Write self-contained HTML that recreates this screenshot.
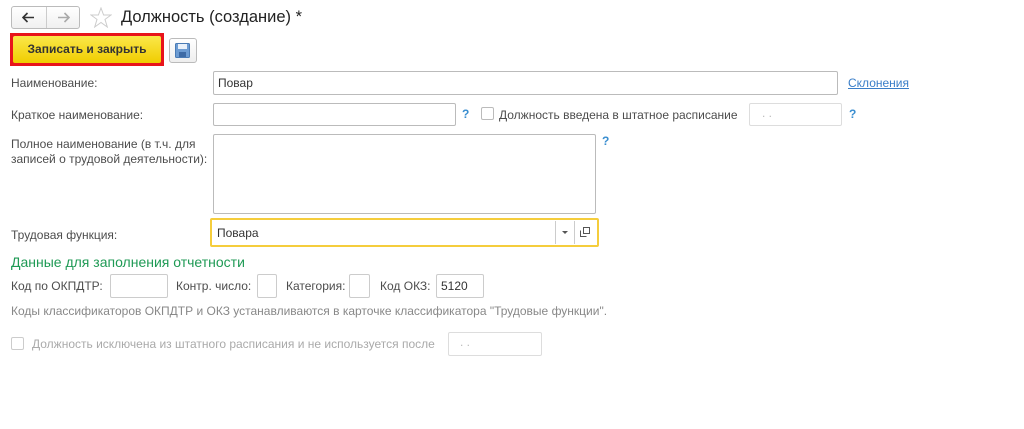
<!DOCTYPE html>
<html><head><meta charset="utf-8"><style>
body{margin:0;width:1024px;height:429px;background:#fff;font-family:"Liberation Sans",Arial,sans-serif;font-size:12px;color:#444;position:relative;overflow:hidden}
.a{position:absolute;white-space:nowrap}
.in{position:absolute;border:1px solid #bbb;border-radius:2px;background:#fff;box-sizing:border-box}
.lbl{position:absolute;color:#4d4d4d;font-size:12px;line-height:14px;white-space:nowrap}
.q{position:absolute;color:#3a8ed0;font-weight:bold;font-size:12px}
.cb{position:absolute;width:13px;height:13px;border:1px solid #bbb;border-radius:2px;box-sizing:border-box;background:#fff}
</style></head><body>
<div class="in" style="left:11px;top:6px;width:69px;height:23px;border-radius:3px;background:linear-gradient(#fff,#f0f0f0)"></div>
<div class="a" style="left:46px;top:7px;width:1px;height:21px;background:#ccc"></div>
<svg class="a" style="left:22px;top:12px" width="13" height="11"><path d="M1 5.5H12M5.5 1L1 5.5L5.5 10" stroke="#333" stroke-width="1.6" fill="none"/></svg>
<svg class="a" style="left:57px;top:12px" width="13" height="11"><path d="M1 5.5H12M7.5 1L12 5.5L7.5 10" stroke="#aaa" stroke-width="1.6" fill="none"/></svg>
<svg class="a" style="left:90px;top:7px" width="22" height="21"><path d="M11 1L13.6 8H21L15 12.4L17.3 20L11 15.5L4.7 20L7 12.4L1 8H8.4Z" fill="none" stroke="#ccc" stroke-width="1"/></svg>
<div class="a" style="left:121px;top:8px;font-size:16.5px;color:#222">Должность (создание) *</div>
<div class="a" style="left:10px;top:33px;width:154px;height:33px;background:#e8141b"></div>
<div class="a" style="left:13px;top:36px;width:148px;height:27px;background:linear-gradient(#fbe84a,#f0cd00);border-radius:2px;text-align:center;line-height:27px;font-weight:bold;color:#333;font-size:12px">Записать и закрыть</div>
<div class="in" style="left:169px;top:38px;width:28px;height:25px;border-radius:3px;background:linear-gradient(#fff,#eee)"></div>
<svg class="a" style="left:175px;top:43px" width="15" height="15"><rect x="0.5" y="0.5" width="14" height="14" rx="1" fill="#6c9bd2" stroke="#4a7bb5"/><rect x="3" y="1" width="9" height="5" fill="#e8f0fa"/><rect x="4" y="9" width="7" height="5" fill="#3d6aa5"/></svg>

<div class="lbl" style="left:11px;top:76px">Наименование:</div>
<div class="in" style="left:213px;top:71px;width:625px;height:24px"></div>
<div class="a" style="left:218px;top:76px;color:#333">Повар</div>
<div class="a" style="left:848px;top:76px;color:#3a7ec8;text-decoration:underline">Склонения</div>

<div class="lbl" style="left:11px;top:108px">Краткое наименование:</div>
<div class="in" style="left:213px;top:103px;width:243px;height:23px"></div>
<div class="q" style="left:462px;top:107px">?</div>
<div class="cb" style="left:481px;top:107px"></div>
<div class="lbl" style="left:499px;top:108px">Должность введена в штатное расписание</div>
<div class="in" style="left:749px;top:103px;width:93px;height:23px;border-color:#ddd"></div>
<div class="a" style="left:762px;top:106px;color:#bbb">. .</div>
<div class="q" style="left:849px;top:107px">?</div>

<div class="lbl" style="left:11px;top:137px;line-height:15px">Полное наименование (в т.ч. для<br>записей о трудовой деятельности):</div>
<div class="in" style="left:213px;top:134px;width:383px;height:80px"></div>
<div class="q" style="left:602px;top:134px">?</div>

<div class="lbl" style="left:11px;top:228px">Трудовая функция:</div>
<div class="a" style="left:210px;top:218px;width:389px;height:29px;border:2px solid #f5cd3c;box-sizing:border-box;border-radius:2px;background:#fff"></div>
<div class="a" style="left:217px;top:226px;color:#333">Повара</div>
<div class="a" style="left:555px;top:221px;width:1px;height:23px;background:#ccc"></div>
<div class="a" style="left:574px;top:221px;width:1px;height:23px;background:#ccc"></div>
<svg class="a" style="left:562px;top:231px" width="6" height="4"><path d="M0 0H6L3 3Z" fill="#555"/></svg>
<svg class="a" style="left:580px;top:227px" width="10" height="10"><rect x="3.5" y="0.5" width="6" height="6" fill="none" stroke="#555"/><path d="M0.5 3.5V9.5H6.5" fill="none" stroke="#555"/></svg>

<div class="a" style="left:11px;top:254px;font-size:14px;color:#1f9a55">Данные для заполнения отчетности</div>
<div class="lbl" style="left:11px;top:279px">Код по ОКПДТР:</div>
<div class="in" style="left:110px;top:274px;width:58px;height:24px;border-color:#ccc"></div>
<div class="lbl" style="left:176px;top:279px">Контр. число:</div>
<div class="in" style="left:257px;top:274px;width:20px;height:24px;border-color:#ccc"></div>
<div class="lbl" style="left:286px;top:279px">Категория:</div>
<div class="in" style="left:349px;top:274px;width:21px;height:24px;border-color:#ccc"></div>
<div class="lbl" style="left:380px;top:279px">Код ОКЗ:</div>
<div class="in" style="left:436px;top:274px;width:48px;height:24px;border-color:#ccc"></div>
<div class="a" style="left:441px;top:279px;color:#333">5120</div>
<div class="lbl" style="left:11px;top:304px;color:#888">Коды классификаторов ОКПДТР и ОКЗ устанавливаются в карточке классификатора "Трудовые функции".</div>

<div class="cb" style="left:11px;top:337px;border-color:#ccc"></div>
<div class="lbl" style="left:32px;top:337px;color:#aaa">Должность исключена из штатного расписания и не используется после</div>
<div class="in" style="left:448px;top:332px;width:94px;height:24px;border-color:#ddd"></div>
<div class="a" style="left:460px;top:335px;color:#bbb">. .</div>
</body></html>
